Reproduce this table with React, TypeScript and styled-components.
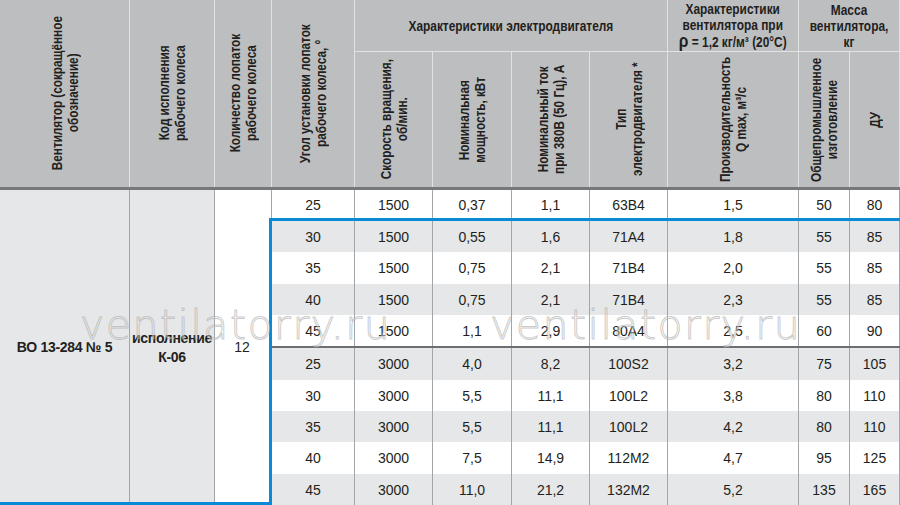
import React from "react";
import styled, { createGlobalStyle } from "styled-components";

const GlobalStyle = createGlobalStyle`
  html, body { margin: 0; padding: 0; background: #ffffff; }
  body { width: 900px; height: 505px; overflow: hidden; }
  * { box-sizing: border-box; }
`;

const REGULAR = `"Liberation Sans", Arial, sans-serif`;

const HEAD_BG = "#bcbec0";
const HEAD_LINE = "#e1e2e3";
const STRIPE = "#e6e7e8";
const GRID_LINE = "#a3a5a8";
const BLUE = "#0a8ad6";
const INK = "#231f20";

const Sheet = styled.div`
  position: relative;
  width: 900px;
  height: 505px;
  display: flex;
  flex-direction: column;
  overflow: hidden;
  color: ${INK};
  font-family: ${REGULAR};
`;

const Header = styled.div`
  display: grid;
  grid-template-columns: 130px 85px 57px 83px 78px 79px 78px 78px 131px 51px 50px;
  grid-template-rows: 52px 135px;
  height: 190px;
  background: ${HEAD_BG};
  border-bottom: 3px solid #77787b;
`;

const HeadCell = styled.div<{ $col: string; $row: string; $under?: boolean }>`
  grid-column: ${(p) => p.$col};
  grid-row: ${(p) => p.$row};
  display: flex;
  align-items: center;
  justify-content: center;
  border-right: 1px solid ${HEAD_LINE};
  border-bottom: ${(p) => (p.$under ? `1px solid ${HEAD_LINE}` : "none")};
  font-weight: 700;
  font-size: 14.5px;
  line-height: 16px;
  text-align: center;
  min-width: 0;
`;

const Vertical = styled.span`
  writing-mode: vertical-rl;
  transform: rotate(180deg) scaleY(0.81);
  white-space: nowrap;
`;

const Condensed = styled.span`
  display: inline-block;
  white-space: nowrap;
  transform: scaleX(0.82);
`;

const Rho = styled.span`
  font-size: 19px;
`;

const Body = styled.div`
  display: flex;
  height: 315px;
`;

const LeftBlock = styled.div`
  width: 269px;
  display: flex;
  border-bottom: 3px solid ${BLUE};
`;

const MergedCell = styled.div<{ $w: number; $shade?: boolean; $line?: boolean; $bold?: boolean }>`
  width: ${(p) => p.$w}px;
  display: flex;
  align-items: center;
  justify-content: center;
  text-align: center;
  white-space: nowrap;
  background: ${(p) => (p.$shade ? STRIPE : "#ffffff")};
  border-right: ${(p) => (p.$line ? `1px solid ${GRID_LINE}` : "none")};
  font-weight: ${(p) => (p.$bold ? 700 : 400)};
  font-size: 14px;
  letter-spacing: ${(p) => (p.$bold ? "-0.3px" : "0")};
  line-height: 19px;
  padding-top: 3px;
`;

const RightBlock = styled.div`
  width: 631px;
  display: flex;
  flex-direction: column;
`;

const FirstRowWrap = styled.div`
  height: 28px;
  padding-left: 2px;
  background: #ffffff;
  display: flex;
`;

const LowerFrame = styled.div`
  flex: 1;
  display: flex;
  flex-direction: column;
  border-left: 3px solid ${BLUE};
  border-top: 3px solid ${BLUE};
`;

const DataRow = styled.div<{ $lead: number; $shade?: boolean }>`
  flex: 1;
  display: grid;
  grid-template-columns: ${(p) => p.$lead}px 78px 79px 78px 78px 131px 51px 50px;
  background: ${(p) => (p.$shade ? STRIPE : "#ffffff")};
`;

const Divider = styled.div`
  height: 2px;
  background: #6d6e71;
`;

const Cell = styled.div<{ $edge?: boolean }>`
  display: flex;
  align-items: center;
  justify-content: center;
  border-right: 1px solid ${GRID_LINE};
  border-left: ${(p) => (p.$edge ? `1px solid ${GRID_LINE}` : "none")};
  font-size: 14px;
  padding-top: 1px;
`;

const WatermarkLayer = styled.div`
  position: absolute;
  inset: 0;
  pointer-events: none;
`;

const Watermark = styled.div<{ $x: number }>`
  position: absolute;
  left: ${(p) => p.$x}px;
  top: 304px;
  font-family: "DejaVu Sans", "Liberation Sans", sans-serif;
  font-weight: 200;
  font-size: 41px;
  line-height: 42px;
  letter-spacing: 1.5px;
  white-space: nowrap;
  color: rgba(255, 255, 255, 0.4);
  -webkit-text-stroke: 1px rgba(160, 160, 160, 0.55);
`;

type Row = [string, string, string, string, string, string, string, string];

const rows: Row[] = [
  ["25", "1500", "0,37", "1,1", "63В4", "1,5", "50", "80"],
  ["30", "1500", "0,55", "1,6", "71А4", "1,8", "55", "85"],
  ["35", "1500", "0,75", "2,1", "71В4", "2,0", "55", "85"],
  ["40", "1500", "0,75", "2,1", "71В4", "2,3", "55", "85"],
  ["45", "1500", "1,1", "2,9", "80А4", "2,5", "60", "90"],
  ["25", "3000", "4,0", "8,2", "100S2", "3,2", "75", "105"],
  ["30", "3000", "5,5", "11,1", "100L2", "3,8", "80", "110"],
  ["35", "3000", "5,5", "11,1", "100L2", "4,2", "80", "110"],
  ["40", "3000", "7,5", "14,9", "112M2", "4,7", "95", "125"],
  ["45", "3000", "11,0", "21,2", "132M2", "5,2", "135", "165"],
];

const renderCells = (r: Row, edge: boolean) =>
  r.map((v, i) => (
    <Cell key={i} $edge={edge && i === 0}>
      {v}
    </Cell>
  ));

export default function App() {
  const [first, ...rest] = rows;
  return (
    <>
      <GlobalStyle />
      <Sheet>
        <Header>
          <HeadCell $col="1" $row="1 / 3">
            <Vertical>
              Вентилятор (сокращённое
              <br />
              обозначение)
            </Vertical>
          </HeadCell>
          <HeadCell $col="2" $row="1 / 3">
            <Vertical>
              Код исполнения
              <br />
              рабочего колеса
            </Vertical>
          </HeadCell>
          <HeadCell $col="3" $row="1 / 3">
            <Vertical>
              Количество лопаток
              <br />
              рабочего колеса
            </Vertical>
          </HeadCell>
          <HeadCell $col="4" $row="1 / 3">
            <Vertical>
              Угол установки лопаток
              <br />
              рабочего колеса, °
            </Vertical>
          </HeadCell>
          <HeadCell $col="5 / 9" $row="1" $under>
            <Condensed>Характеристики электродвигателя</Condensed>
          </HeadCell>
          <HeadCell $col="9" $row="1" $under>
            <Condensed>
              Характеристики
              <br />
              вентилятора при
              <br />
              <Rho>ρ</Rho> = 1,2 кг/м³ (20°С)
            </Condensed>
          </HeadCell>
          <HeadCell $col="10 / 12" $row="1" $under>
            <Condensed>
              Масса
              <br />
              вентилятора,
              <br />
              кг
            </Condensed>
          </HeadCell>
          <HeadCell $col="5" $row="2">
            <Vertical>
              Скорость вращения,
              <br />
              об/мин.
            </Vertical>
          </HeadCell>
          <HeadCell $col="6" $row="2">
            <Vertical>
              Номинальная
              <br />
              мощность, кВт
            </Vertical>
          </HeadCell>
          <HeadCell $col="7" $row="2">
            <Vertical>
              Номинальный ток
              <br />
              при 380В (50 Гц), А
            </Vertical>
          </HeadCell>
          <HeadCell $col="8" $row="2">
            <Vertical>
              Тип
              <br />
              электродвигателя *
            </Vertical>
          </HeadCell>
          <HeadCell $col="9" $row="2">
            <Vertical>
              Производительность
              <br />
              Q max, м³/с
            </Vertical>
          </HeadCell>
          <HeadCell $col="10" $row="2">
            <Vertical>
              Общепромышленное
              <br />
              изготовление
            </Vertical>
          </HeadCell>
          <HeadCell $col="11" $row="2">
            <Vertical>ДУ</Vertical>
          </HeadCell>
        </Header>

        <Body>
          <LeftBlock>
            <MergedCell $w={130} $shade $line $bold>
              ВО 13-284 № 5
            </MergedCell>
            <MergedCell $w={85} $shade $line $bold>
              исполнение
              <br />
              К-06
            </MergedCell>
            <MergedCell $w={54}>12</MergedCell>
          </LeftBlock>
          <RightBlock>
            <FirstRowWrap>
              <DataRow $lead={84}>{renderCells(first, true)}</DataRow>
            </FirstRowWrap>
            <LowerFrame>
              {rest.slice(0, 4).map((r, i) => (
                <DataRow key={i} $lead={83} $shade={i % 2 === 0}>
                  {renderCells(r, false)}
                </DataRow>
              ))}
              <Divider />
              {rest.slice(4).map((r, i) => (
                <DataRow key={i + 4} $lead={83} $shade={i % 2 === 0}>
                  {renderCells(r, false)}
                </DataRow>
              ))}
            </LowerFrame>
          </RightBlock>
        </Body>

        <WatermarkLayer>
          <Watermark $x={80}>ventilatorry.ru</Watermark>
          <Watermark $x={490}>ventilatorry.ru</Watermark>
        </WatermarkLayer>
      </Sheet>
    </>
  );
}
